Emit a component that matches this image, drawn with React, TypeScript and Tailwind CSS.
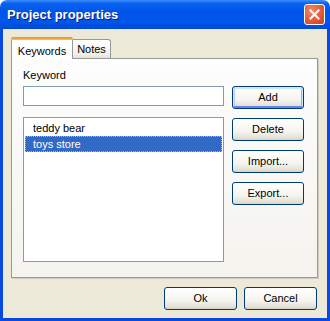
import React from "react";

const font = { fontFamily: '"Liberation Sans", Arial, sans-serif' };

function XpButton({
  label,
  isDefault,
  className,
}: {
  label: string;
  isDefault?: boolean;
  className?: string;
}) {
  let classes =
    "h-[23px] rounded-[3px] border border-[#003c74] bg-[linear-gradient(to_bottom,#ffffff_0%,#f5f4ef_60%,#e3e0d6_90%,#d6d0c5_100%)] text-[11px] text-black flex items-center justify-center";
  if (isDefault)
    classes +=
      " shadow-[inset_0_1px_0_1px_#cee7ff,inset_0_-1px_0_1px_#6982ee,inset_1px_0_0_1px_#b9d1fa,inset_-1px_0_0_1px_#94b5f5]";
  if (className) classes += ` ${className}`;
  return <div className={classes}>{label}</div>;
}

export default function App() {
  return (
    <div className="w-[330px] h-[321px] flex flex-col select-none" style={font}>
      {/* title bar */}
      <div className="h-[29px] rounded-t-[7px] bg-[linear-gradient(to_bottom,#3c8dfc_0%,#0a62f2_12%,#0055e8_40%,#0056ea_80%,#0047d0_100%)] flex items-center justify-between pl-[7px] pr-[5px]">
        <span className="text-white font-bold text-[13px] [text-shadow:1px_1px_0_#0a1b7a] mt-[1px]">
          Project properties
        </span>
        <div className="w-[21px] h-[21px] rounded-[3px] border border-white bg-[radial-gradient(circle_at_35%_30%,#f08a6c_0%,#e25a3a_55%,#c4411f_100%)] flex items-center justify-center">
          <svg width="11" height="11" viewBox="0 0 11 11">
            <path d="M1.5 1.5 L9.5 9.5 M9.5 1.5 L1.5 9.5" stroke="white" strokeWidth="2" strokeLinecap="square" />
          </svg>
        </div>
      </div>

      {/* body */}
      <div className="flex-1 bg-[#ece9d8] border-l-[3px] border-r-[3px] border-b-[3px] border-[#0b48df] flex flex-col px-[8px] pt-[8px]">
        {/* tabs */}
        <div className="flex items-end h-[21px] relative z-10">
          <div className="w-[62px] h-[22px] -mb-[1px] bg-white border border-[#919b9c] border-b-0 rounded-t-[3px] relative flex items-start justify-center pt-[5px] text-[11px] text-black">
            <div className="absolute -top-[1px] -left-[1px] -right-[1px] h-[3px] rounded-t-[3px] bg-[linear-gradient(to_bottom,#e68b2c,#ffc73c)]" />
            Keywords
          </div>
          <div className="w-[38px] h-[19px] bg-[linear-gradient(to_bottom,#ffffff,#f4f3ee_70%,#e6e3d8)] border border-[#919b9c] border-b-0 border-l-0 rounded-tr-[3px] flex items-center justify-center pt-[1px] text-[11px] text-black">
            Notes
          </div>
        </div>

        {/* panel */}
        <div className="w-[307px] h-[220px] border border-[#919b9c] bg-[linear-gradient(to_bottom,#fdfdfd,#f4f3ee)] shadow-[1px_1px_0_#d0cdc0] flex gap-[8px] pl-[11px] pt-[10px]">
          <div className="w-[201px] flex flex-col">
            <div className="h-[13px] text-[11px] leading-[13px] text-black">Keyword</div>
            <div className="mt-[4px] h-[20px] border border-[#7f9db9] bg-white" />
            <div className="mt-[11px] h-[145px] border border-[#7f9db9] bg-white pt-[2px] px-[1px] text-[11px]">
              <div className="h-[16px] pl-[8px] flex items-center text-black">teddy bear</div>
              <div className="h-[16px] pl-[7px] flex items-center text-white bg-[#316ac5] border border-dotted border-[#e3b353]">
                toys store
              </div>
            </div>
          </div>
          <div className="flex flex-col gap-[9px] pt-[17px]">
            <XpButton label="Add" isDefault className="w-[72px]" />
            <XpButton label="Delete" className="w-[72px]" />
            <XpButton label="Import..." className="w-[72px]" />
            <XpButton label="Export..." className="w-[72px]" />
          </div>
        </div>

        {/* footer */}
        <div className="flex justify-end gap-[7px] mt-[9px] pr-[2px]">
          <XpButton label="Ok" className="w-[73px]" />
          <XpButton label="Cancel" className="w-[73px]" />
        </div>
      </div>
    </div>
  );
}
